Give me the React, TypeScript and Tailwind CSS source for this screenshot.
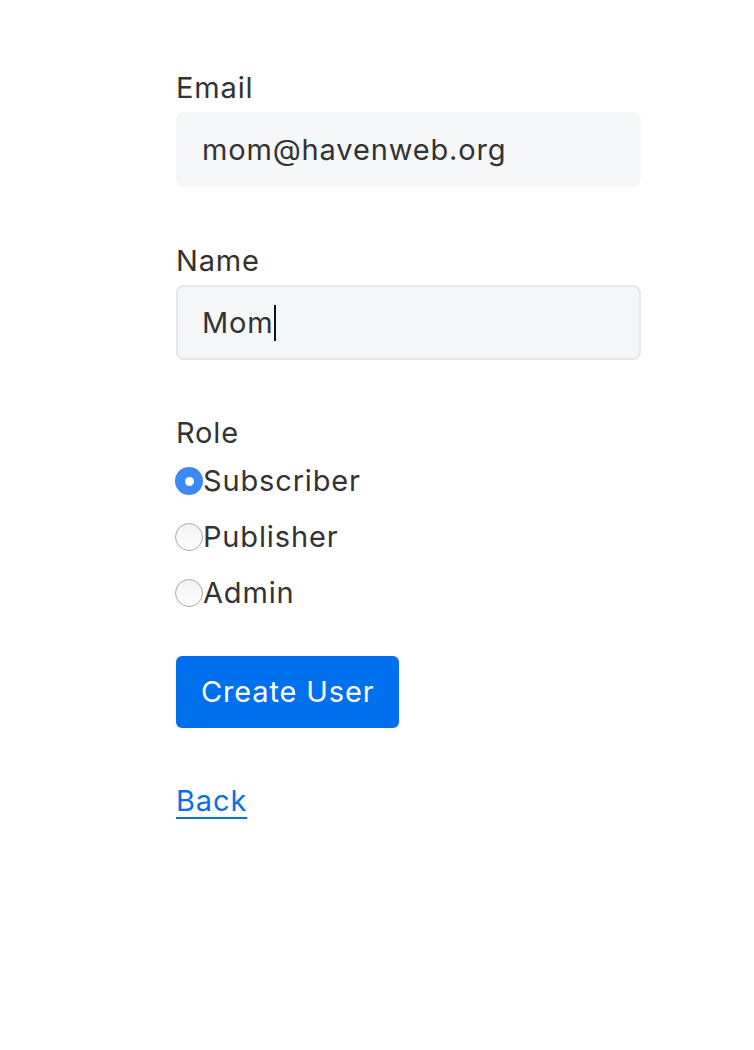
import React, { useState } from 'react';

const roles = ['Subscriber', 'Publisher', 'Admin'];

export default function App() {
  const [role, setRole] = useState('Subscriber');

  return (
    <div className="min-h-screen bg-white text-[#333333] [font-family:Inter,'Noto_Sans',sans-serif] tracking-[0.85px]">
      <form className="ml-[176px] w-[465px] pt-[70px]" onSubmit={(e) => e.preventDefault()}>
        {/* Email */}
        <label className="block text-[29px] leading-[35px] mb-[7px]">Email</label>
        <div className="h-[75px] rounded-lg bg-[#f6f7f9] border-2 border-[#f6f7f9] flex items-center px-6 text-[29px]">
          mom@havenweb.org
        </div>

        {/* Name */}
        <label className="block text-[29px] leading-[35px] mt-[56px] mb-[7px]">Name</label>
        <div className="h-[75px] rounded-lg bg-[#f6f7f9] border-2 border-[#e6e7ea] flex items-center px-6 text-[29px]">
          <span>Mom</span>
          <span className="inline-block w-[2px] h-[36px] bg-[#111111]" />
        </div>

        {/* Role */}
        <label className="block text-[29px] leading-[35px] mt-[55px]">Role</label>
        <div className="mt-[3px] flex flex-col">
          {roles.map((r) => (
            <label
              key={r}
              className="h-[56px] flex items-center text-[29px] cursor-pointer -ml-px"
              onClick={() => setRole(r)}
            >
              {role === r ? (
                <span className="w-[28px] h-[28px] rounded-full bg-[#3d88f5] flex items-center justify-center">
                  <span className="w-[9px] h-[9px] rounded-full bg-white" />
                </span>
              ) : (
                <span className="w-[28px] h-[28px] rounded-full border border-[#a8a8a8] bg-gradient-to-b from-[#f4f4f4] to-white" />
              )}
              <span>{r}</span>
            </label>
          ))}
        </div>

        <button
          type="submit"
          className="mt-[35px] h-[72px] px-[25px] rounded-md bg-[#0070ef] text-white text-[29px] tracking-[0.85px]"
        >
          Create User
        </button>

        <div className="mt-[55px]">
          <a href="#" className="text-[29px] leading-[35px] text-[#0a6ee8] underline underline-offset-[6px]">
            Back
          </a>
        </div>
      </form>
    </div>
  );
}
